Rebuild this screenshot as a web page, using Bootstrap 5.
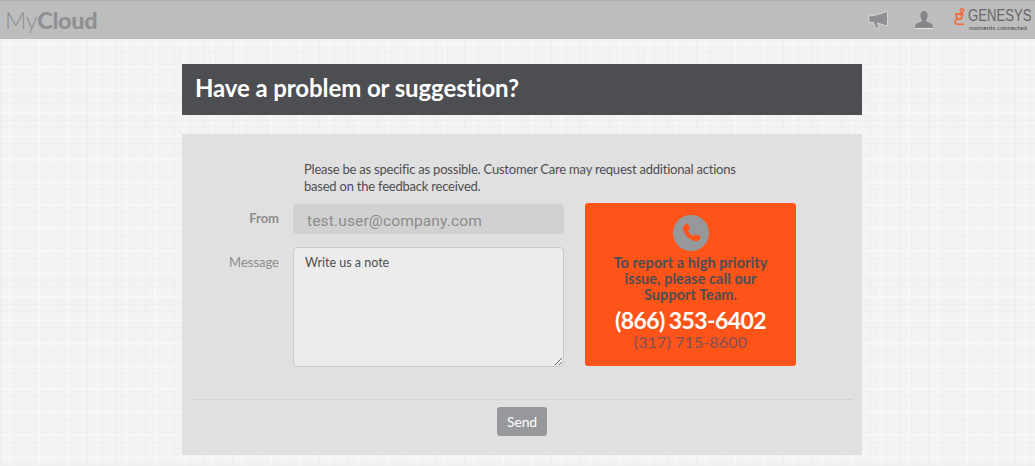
<!DOCTYPE html>
<html lang="en">
<head>
  <meta charset="UTF-8">
  <title>MyCloud - Feedback</title>
  <meta name="viewport" content="width=device-width, initial-scale=1">
  <link href="https://cdn.jsdelivr.net/npm/bootstrap@5.3.3/dist/css/bootstrap.min.css" rel="stylesheet">
  <style>
    html, body { height: 466px; overflow: hidden; }
    body {
      font-family: Lato, "Liberation Sans", sans-serif;
      font-size: 14px;
      color: #4d4e52;
      background-color: #f3f3f3;
      background-image:
        repeating-linear-gradient(0deg, rgba(232,232,232,.5) 0 1px, transparent 1px 7px, rgba(250,250,250,.6) 7px 9px, transparent 9px 17px, rgba(232,232,232,.35) 17px 18px, transparent 18px 23px),
        repeating-linear-gradient(90deg, rgba(232,232,232,.5) 0 1px, transparent 1px 9px, rgba(250,250,250,.6) 9px 11px, transparent 11px 16px, rgba(232,232,232,.35) 16px 17px, transparent 17px 29px);
    }
    .top-bar {
      height: 39px;
      background: #bdbdbd;
      border-top: 1px solid #acacac;
      padding: 0 8px 0 5px;
    }
    .brand-name { font-size: 23.5px; line-height: 36px; color: #8f9093; font-weight: 300; letter-spacing: -.3px; }
    .brand-name b { font-weight: 900; }
    .top-icon { display: block; flex: none; }
    .icon-gap-a { margin-right: 26px; }
    .icon-gap-b { margin-right: 21px; }
    .gen-logo { width: 73px; height: 24px; }
    .gen-text { width: 59px; margin-left: 3px; flex: none; }
    .gen-word {
      font-family: "Liberation Sans", sans-serif; font-size: 16px; line-height: 15px; color: #66676a;
      white-space: nowrap; transform: scaleX(.82); transform-origin: left center;
    }
    .gen-tag { font-size: 6.5px; line-height: 9px; color: #4d4e52; text-align: right; white-space: nowrap; }
    .page-wrap { width: 680px; margin: 25px 0 0 182px; }
    .title-bar {
      height: 51px;
      background: #4d4e52;
      color: #fff;
      font-size: 24px;
      font-weight: 700;
      letter-spacing: -.1px;
      line-height: 47px;
      padding-left: 13px;
      margin-bottom: 19px;
    }
    .form-panel { height: 321px; background: #e0e0e0; position: relative; }
    .form-body { height: 265px; padding: 27px 0 0 0; }
    .intro-text { width: 460px; margin-left: 122px; font-size: 13px; letter-spacing: -.22px; line-height: 16.5px; color: #4d4e52; margin-bottom: 10px; }
    .field-row { display: flex; }
    .field-label { width: 97px; flex: none; margin: 0; text-align: right; color: #8b8c8f; font-size: 13px; font-weight: 700; }
    .field-label-light { font-weight: 400; padding-top: 2px; }
    .from-input.form-control {
      width: 271px; height: 30px; margin-left: 14px; padding: 3px 13px 0;
      font-family: Roboto, sans-serif; font-size: 15.5px; letter-spacing: .15px;
      background: #d1d1d1; border: 1px solid #d1d1d1; color: #8b8c8f; border-radius: 4px;
    }
    .msg-input.form-control {
      width: 271px; height: 120px; margin-left: 14px; padding: 6px 11px;
      font-size: 12.5px; line-height: 18px;
      background: #ececec; border: 1px solid #c9c9c9; color: #4d4e52; border-radius: 4px;
    }
    .msg-row { margin-top: 13px; }
    .call-box {
      position: absolute; left: 403px; top: 69px;
      width: 211px; height: 163px;
      background: #ff5419;
      border-radius: 3px;
      text-align: center;
      padding-top: 12px;
    }
    .call-icon { width: 36px; height: 36px; border-radius: 50%; background: #97989b; margin: 0 auto 4px; display: flex; align-items: center; justify-content: center; }
    .call-text { font-size: 14.5px; font-weight: 700; line-height: 16px; color: #4d4e52; letter-spacing: .05px; }
    .call-main { font-size: 23px; font-weight: 700; line-height: 30px; color: #fff; letter-spacing: -.6px; word-spacing: -1px; margin-top: 2px; }
    .call-alt { font-size: 16px; line-height: 16px; color: #7d5058; letter-spacing: .15px; margin-top: -1px; }
    .form-foot { margin: 0 9px; border-top: 1px solid #d3d3d3; padding-top: 7px; text-align: center; }
    .send-btn.btn {
      width: 50px; height: 29px; padding: 0; background: #97989b; border: 0; border-radius: 3px;
      color: #fff; font-size: 14px; font-weight: 400; letter-spacing: -.2px; line-height: 28px;
    }
  </style>
</head>
<body>

<nav class="top-bar d-flex align-items-center">
  <div class="brand-name">My<b>Cloud</b></div>
  <div class="ms-auto d-flex align-items-center">
    <svg class="top-icon icon-gap-a" width="21" height="18" viewBox="0 0 21 18">
      <path d="M.5 5 L6 4.500 L19.500 .5 V15 L9.500 12 L11 17 L7.500 17 L5.500 11.500 L1.500 11.500 Z" fill="#8f9093" stroke="#efefef" stroke-width=".6"/>
    </svg>
    <svg class="top-icon icon-gap-b" width="18" height="18" viewBox="0 0 20 20">
      <path d="M10 0 C13 0 14 2.500 14 5 C14 7.500 12.800 9.500 12 10.500 C12 12 15 12.500 17.500 13.500 C19 14 20 15 20 19 H0 C0 15 1 14 2.500 13.500 C5 12.500 8 12 8 10.500 C7.200 9.500 6 7.500 6 5 C6 2.500 7 0 10 0 Z" fill="#85868a"/>
      <path d="M0 19.300 H20" stroke="#f1f1f1" stroke-width=".8"/>
    </svg>
    <div class="gen-logo d-flex">
      <svg class="top-icon" width="11" height="18" viewBox="0 0 11 18" fill="none" stroke="#f0693a" stroke-width="1.500">
        <circle cx="8" cy="2.500" r="1.700"/>
        <path d="M1 5.800 H8.500 V8"/>
        <circle cx="5" cy="8.500" r="2.800"/>
        <path d="M5 11.300 H3.500 A2.500 2.500 0 0 0 3.500 16.300 H10"/>
      </svg>
      <div class="gen-text">
        <div class="gen-word">GENESYS</div>
        <div class="gen-tag">moments connected</div>
      </div>
    </div>
  </div>
</nav>

<main class="page-wrap">
  <div class="title-bar">Have a problem or suggestion?</div>
  <div class="form-panel">
    <div class="form-body">
      <p class="intro-text">Please be as specific as possible. Customer Care may request additional actions based on the feedback received.</p>
      <form>
        <div class="field-row align-items-center">
          <label class="field-label" for="fromField">From</label>
          <input class="form-control from-input" id="fromField" type="text" value="test.user@company.com" readonly>
        </div>
        <div class="field-row msg-row">
          <label class="field-label field-label-light mt-1" for="msgField">Message</label>
          <textarea class="form-control msg-input" id="msgField">Write us a note</textarea>
        </div>
      </form>
    </div>
    <div class="call-box">
      <div class="call-icon">
        <svg width="20" height="20" viewBox="0 0 20 20">
          <path d="M4.500 1 L7 .5 L9 5.500 L7 7.500 C7.500 9.500 10.500 12.500 12.500 13 L14.500 11 L19.500 13.500 L19 16 C17.500 18 15.500 18.500 13.500 18 C8 16.500 3.500 12 2 6.500 C1.500 4.500 2.500 2.500 4.500 1 Z" fill="#ff5419"/>
        </svg>
      </div>
      <div class="call-text">To report a high priority<br>issue, please call our<br>Support Team.</div>
      <div class="call-main">(866) 353-6402</div>
      <div class="call-alt">(317) 715-8600</div>
    </div>
    <div class="form-foot">
      <button class="btn send-btn" type="button">Send</button>
    </div>
  </div>
</main>

<script src="https://cdn.jsdelivr.net/npm/bootstrap@5.3.3/dist/js/bootstrap.bundle.min.js"></script>
</body>
</html>
